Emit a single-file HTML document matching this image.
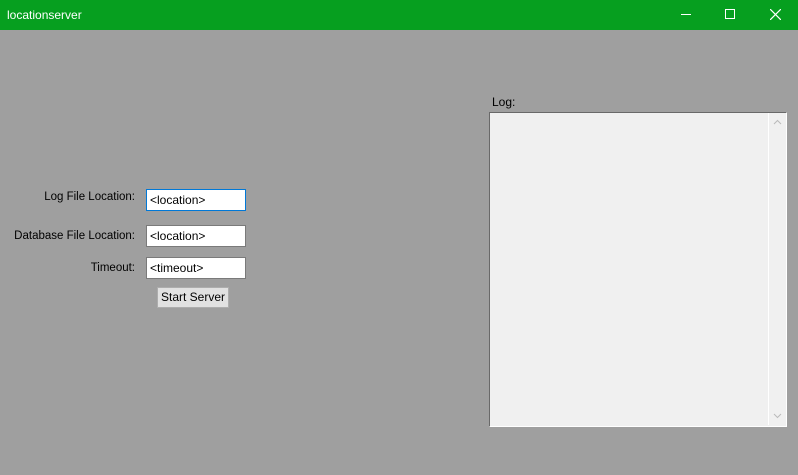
<!DOCTYPE html><html><head><style>
body{margin:0;width:798px;height:475px;background:#9f9f9f;font-family:"Liberation Sans",sans-serif;font-size:12px;position:relative;overflow:hidden}
.t{position:absolute;left:0;top:0;width:798px;height:30px;background:#069f1f;color:#fff}
.a{position:absolute}
.in{position:absolute;left:146px;height:20px;background:#fff;border:1px solid #7a7a7a;box-sizing:content-box;font-size:12px;line-height:20px;padding-left:3px;width:95px}
.lb{position:absolute;right:663px;color:#000;font-size:11.5px}
</style></head><body>
<div class="t"><span class="a" style="left:7px;top:8px;font-size:12px">locationserver</span>
<div class="a" style="left:681px;top:14px;width:10px;height:1px;background:#fff"></div>
<div class="a" style="left:725px;top:9px;width:8px;height:8px;border:1px solid #fff"></div>
<svg class="a" style="left:770px;top:9px" width="11" height="11"><path d="M0 0L11 11M11 0L0 11" stroke="#fff" stroke-width="1.2"/></svg></div>
<div class="lb" style="top:191px">Log File Location:</div>
<div class="lb" style="top:230px">Database File Location:</div>
<div class="lb" style="top:262px">Timeout:</div>
<div class="in" style="top:189px;border-color:#0078d7">&lt;location&gt;</div>
<div class="in" style="top:225px">&lt;location&gt;</div>
<div class="in" style="top:257px">&lt;timeout&gt;</div>
<div class="a" style="left:157px;top:287px;width:70px;height:19px;background:#e1e1e1;border:1px solid #adadad;text-align:center;line-height:19px">Start Server</div>
<div class="a" style="left:492px;top:95px">Log:</div>
<div class="a" style="left:489px;top:112px;width:296px;height:313px;background:#f0f0f0;border-top:1px solid #696969;border-left:1px solid #696969;border-right:1px solid #fff;border-bottom:1px solid #fff"></div>
<div class="a" style="left:768px;top:113px;width:1px;height:312px;background:#fff"></div>
<svg class="a" style="left:773px;top:119px" width="9" height="6"><path d="M1 5L4.5 1.5L8 5" stroke="#bbb" fill="none"/></svg>
<svg class="a" style="left:773px;top:413px" width="9" height="6"><path d="M1 1L4.5 4.5L8 1" stroke="#bbb" fill="none"/></svg>
</body></html>
